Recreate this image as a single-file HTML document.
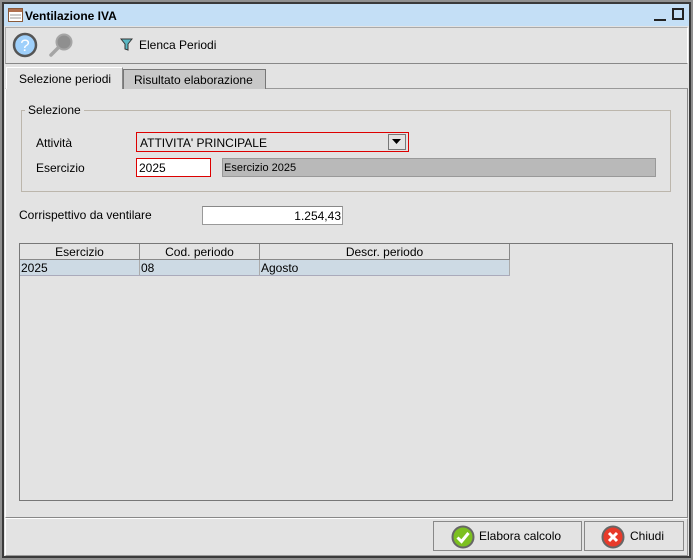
<!DOCTYPE html>
<html><head><style>
*{box-sizing:border-box;margin:0;padding:0}
body{width:693px;height:560px;background:#8c8c8c;font-family:"Liberation Sans",sans-serif;font-size:12px;color:#000;position:relative;overflow:hidden}
.abs{position:absolute}
</style></head><body>
<div class="abs" style="left:0;top:0;width:693px;height:560px;background:#909090"></div>
<div class="abs" style="left:2px;top:2px;width:689px;height:556px;background:#3a3a3a"></div>
<div class="abs" style="left:4px;top:4px;width:685px;height:552px;background:#e3e3e3"></div>
<!-- title bar -->
<div class="abs" style="left:4px;top:4px;width:685px;height:22px;background:#c4dff6"></div>
<svg class="abs" style="left:8px;top:8px" width="15" height="14"><rect x="0.5" y="0.5" width="14" height="13" fill="#fff" stroke="#8a5a3a"/><rect x="1" y="1" width="13" height="3" fill="#b07050"/><line x1="2" y1="7" x2="13" y2="7" stroke="#999"/><line x1="2" y1="10" x2="13" y2="10" stroke="#999"/></svg>
<div class="abs" style="left:25px;top:9px;font-weight:bold;font-size:12px">Ventilazione IVA</div>
<div class="abs" style="left:654px;top:19px;width:12px;height:2px;background:#222"></div>
<div class="abs" style="left:672px;top:8px;width:12px;height:12px;border:2px solid #222"></div>
<!-- toolbar -->
<div class="abs" style="left:5px;top:27px;width:683px;height:37px;border:1px solid #aaa;border-right-color:#fff;border-bottom-color:#888"></div>
<svg class="abs" style="left:12px;top:32px" width="26" height="26"><circle cx="13" cy="13" r="11" fill="#9fd0fb" stroke="#555" stroke-width="2.5"/><text x="13" y="19" font-family="Liberation Sans" font-size="17" fill="#fff" text-anchor="middle">?</text></svg>
<svg class="abs" style="left:48px;top:32px" width="26" height="26"><circle cx="16" cy="10" r="7.5" fill="#8f8f8f" stroke="#a5a5a5" stroke-width="2"/><line x1="10" y1="16" x2="3" y2="23" stroke="#a5a5a5" stroke-width="3.5" stroke-linecap="round"/></svg>
<svg class="abs" style="left:120px;top:38px" width="13" height="13"><path d="M1 1 H12 L8 6 V12 L5 11 V6 Z" fill="#5bb8c4" stroke="#333"/></svg>
<div class="abs" style="left:139px;top:38px">Elenca Periodi</div>
<!-- tabs -->
<div class="abs" style="left:5px;top:88px;width:683px;height:430px;border:1px solid #888;border-top-color:#999;border-left-color:#fff"></div>
<div class="abs" style="left:6px;top:67px;width:117px;height:22px;background:#e3e3e3;border:1px solid #888;border-bottom:none;border-left-color:#fff;border-top-color:#fff;padding:4px 0 0 12px">Selezione periodi</div>
<div class="abs" style="left:123px;top:69px;width:143px;height:20px;background:#c8c8c8;border:1px solid #777;border-bottom:none;padding:3px 0 0 10px">Risultato elaborazione</div>
<!-- selezione group -->
<div class="abs" style="left:21px;top:110px;width:650px;height:82px;border:1px solid #bcb6ac"></div>
<div class="abs" style="left:25px;top:103px;background:#e3e3e3;padding:0 3px">Selezione</div>
<div class="abs" style="left:36px;top:136px">Attività</div>
<div class="abs" style="left:136px;top:132px;width:273px;height:20px;border:1px solid #d00;background:#e3e3e3;padding:3px 0 0 3px">ATTIVITA' PRINCIPALE</div>
<div class="abs" style="left:388px;top:134px;width:18px;height:16px;border:1px solid #777"></div>
<svg class="abs" style="left:392px;top:139px" width="10" height="6"><path d="M0 0 H9 L4.5 5 Z" fill="#000"/></svg>
<div class="abs" style="left:36px;top:161px">Esercizio</div>
<div class="abs" style="left:136px;top:158px;width:75px;height:19px;border:1px solid #d00;background:#fff;padding:2px 0 0 2px">2025</div>
<div class="abs" style="left:222px;top:158px;width:434px;height:19px;border:1px solid #999;background:#b9b9b9;padding:3px 0 0 1px;font-size:11px">Esercizio 2025</div>
<div class="abs" style="left:19px;top:208px">Corrispettivo da ventilare</div>
<div class="abs" style="left:202px;top:206px;width:141px;height:19px;border:1px solid #999;border-top-color:#888;background:#fff;text-align:right;padding:2px 1px 0 0">1.254,43</div>
<!-- table -->
<div class="abs" style="left:19px;top:243px;width:654px;height:258px;border:1px solid #777"></div>
<div class="abs" style="left:20px;top:244px;width:490px;height:16px;border-bottom:1px solid #888;display:flex">
<div style="width:120px;border-right:1px solid #888;text-align:center;padding-top:1px">Esercizio</div>
<div style="width:120px;border-right:1px solid #888;text-align:center;padding-top:1px">Cod. periodo</div>
<div style="width:250px;border-right:1px solid #888;text-align:center;padding-top:1px">Descr. periodo</div></div>
<div class="abs" style="left:20px;top:260px;width:490px;height:16px;background:#cddae4;border-bottom:1px solid #aab;display:flex">
<div style="width:120px;border-right:1px solid #aaa;padding:1px 0 0 1px">2025</div>
<div style="width:120px;border-right:1px solid #aaa;padding:1px 0 0 1px">08</div>
<div style="width:250px;border-right:1px solid #aaa;padding:1px 0 0 1px">Agosto</div></div>
<!-- bottom bar -->
<div class="abs" style="left:5px;top:518px;width:683px;height:38px;border:1px solid #fff;border-right-color:#999;border-bottom-color:#999"></div>
<div class="abs" style="left:433px;top:521px;width:149px;height:30px;border:1px solid #888"></div>
<svg class="abs" style="left:451px;top:525px" width="24" height="24"><circle cx="12" cy="12" r="10.5" fill="#7cc020" stroke="#666" stroke-width="2"/><path d="M6.5 12.5 L10.5 16.5 L17.5 8" fill="none" stroke="#fff" stroke-width="3"/></svg>
<div class="abs" style="left:479px;top:529px">Elabora calcolo</div>
<div class="abs" style="left:584px;top:521px;width:100px;height:30px;border:1px solid #888"></div>
<svg class="abs" style="left:601px;top:525px" width="24" height="24"><circle cx="12" cy="12" r="10.5" fill="#e83a2a" stroke="#666" stroke-width="2"/><path d="M8 8 L16 16 M16 8 L8 16" stroke="#fff" stroke-width="3"/></svg>
<div class="abs" style="left:630px;top:529px">Chiudi</div>
</body></html>
